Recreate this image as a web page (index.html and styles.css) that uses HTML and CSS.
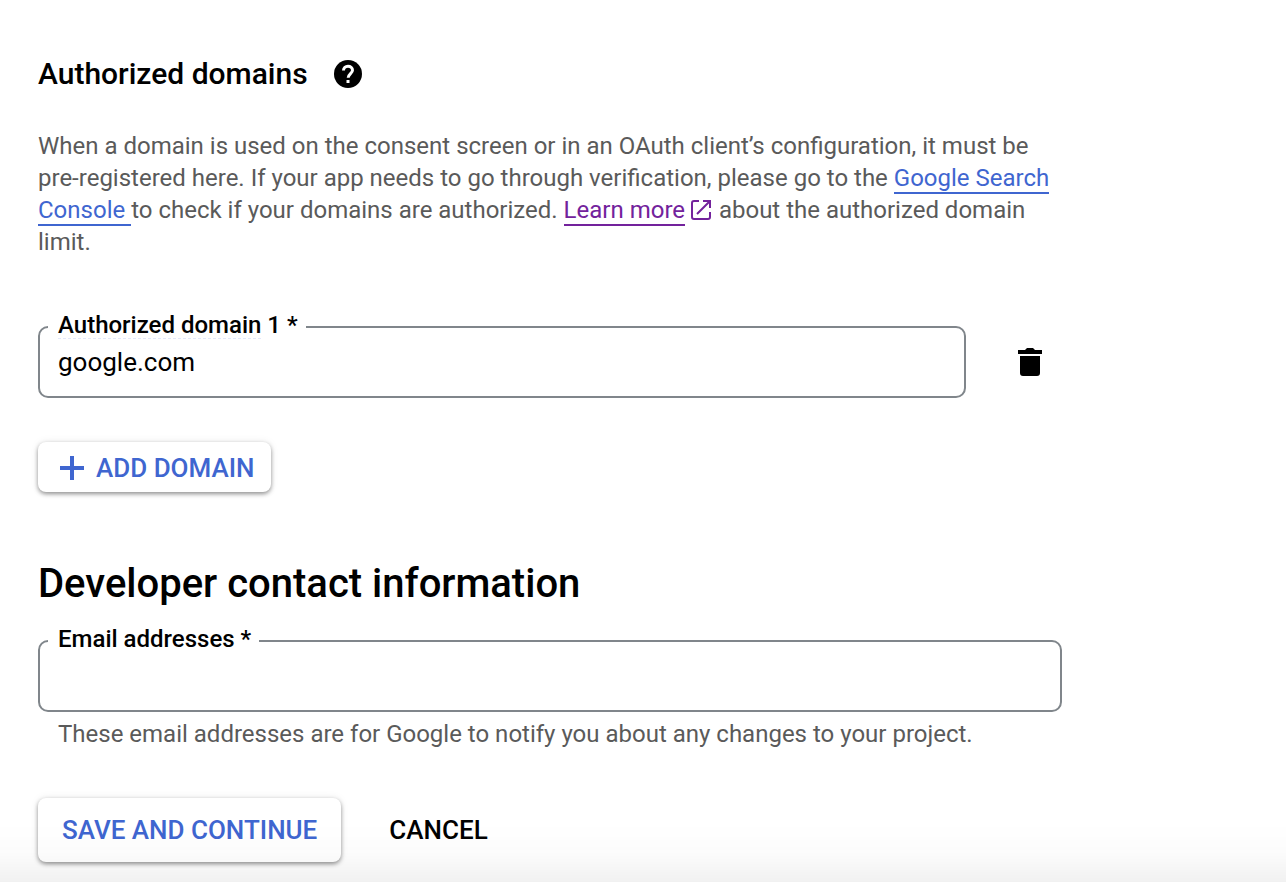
FILE: index.html
```html
<!DOCTYPE html>
<html lang="en">
<head>
<meta charset="utf-8">
<title>Authorized domains</title>
<link rel="stylesheet" href="styles.css">
</head>
<body>
<main class="page">
  <form class="form">
    <section class="domains">
      <header class="heading">
        <h2 class="subtitle">Authorized domains</h2>
        <button class="icon-button" type="button" aria-label="Help">
          <svg width="28" height="28" viewBox="0 0 28 28"><circle cx="14" cy="14" r="14" fill="#000"/><path d="M9.500 10.500C9.500 7.800 11.500 6.200 14 6.200s4.500 1.600 4.500 4c0 3.200-4.300 3.600-4.300 7.600" fill="none" stroke="#fff" stroke-width="3"/><path d="M12.500 20h3v3h-3z" fill="#fff"/></svg>
        </button>
      </header>
      <p class="description">When a domain is used on the consent screen or in an OAuth client’s configuration, it must be pre-registered here. If your app needs to go through verification, please go to the <a class="link" href="#">Google Search Console </a>to check if your domains are authorized. <a class="link visited" href="#">Learn more</a> <svg class="external" width="20" height="20" viewBox="0 0 20 20" fill="none" stroke="currentColor" stroke-width="2"><path d="M8 1H3a2 2 0 0 0-2 2v14a2 2 0 0 0 2 2h14a2 2 0 0 0 2-2v-5M12 1h7v7M19 1 6 14"/></svg> about the authorized domain limit.</p>
      <div class="domain-row">
        <fieldset class="field">
          <legend class="legend"><label class="misspelled" for="domain">Authorized domain</label> 1 *</legend>
          <input class="input" id="domain" type="text" value="google.com" spellcheck="false">
        </fieldset>
        <button class="icon-button delete" type="button" aria-label="Delete domain">
          <svg width="24" height="28" viewBox="0 0 24 28" fill="currentColor"><path d="M0 2h7l2-2h6l2 2h7v4H0zM2 8h20v17a3 3 0 0 1-3 3H5a3 3 0 0 1-3-3z"/></svg>
        </button>
      </div>
      <button class="button add" type="button">
        <svg width="24" height="24" viewBox="0 0 24 24" fill="none" stroke="currentColor" stroke-width="4"><path d="M12 0v24M0 12h24"/></svg>
        ADD DOMAIN
      </button>
    </section>
    <section class="contact">
      <h1 class="title">Developer contact information</h1>
      <fieldset class="field">
        <legend class="legend"><label for="email">Email addresses *</label></legend>
        <input class="input" id="email" type="text">
      </fieldset>
      <p class="hint">These email addresses are for Google to notify you about any changes to your project.</p>
    </section>
    <footer class="actions">
      <button class="button save" type="button">SAVE AND CONTINUE</button>
      <button class="button cancel" type="button">CANCEL</button>
    </footer>
  </form>
</main>
</body>
</html>
```
FILE: styles.css
```css
* { box-sizing: border-box; }
body {
  margin: 0;
  min-height: 100vh;
  background: #fff;
  color: #000;
  font-family: Roboto, "Liberation Sans", sans-serif;
  font-size: 24px;
  line-height: 32px;
}
/* Shade along the bottom edge of the window */
body::after {
  content: "";
  position: fixed;
  inset: auto 0 0;
  height: 60px;
  background: linear-gradient(transparent, rgba(0, 0, 0, .012) 50%, rgba(0, 0, 0, .055));
  pointer-events: none;
}
button, input { font: inherit; }
h1, h2, p, fieldset { margin: 0; }
.page { padding: 56px 38px 20px; }
.form { max-width: 1024px; }
.heading { display: flex; align-items: center; gap: 26px; }
.subtitle { font-size: 30px; font-weight: 500; line-height: 36px; }
.icon-button {
  display: flex;
  padding: 0;
  border: 0;
  background: none;
  color: #000;
}
.description { margin-top: 38px; color: #5a5a5a; }
.link {
  color: #3f66d0;
  text-decoration: none;
  border-bottom: 2px solid currentColor;
}
.visited { color: #73229c; }
.external { margin-right: 2px; color: #73229c; vertical-align: -2px; }
.domain-row { display: flex; align-items: center; gap: 52px; margin-top: 53px; padding-right: 20px; }
.delete { padding-top: 14px; }
.field {
  flex: 1;
  min-width: 0;
  height: 87px;
  padding: 0 8px;
  border: 2px solid #80868b;
  border-radius: 10px;
}
.legend { padding: 0 8px 4px 10px; font-weight: 500; line-height: 28px; }
.misspelled { text-decoration: underline dashed 1px #e3e8fa; text-underline-offset: 5px; }
.input {
  display: block;
  width: 100%;
  height: 38px;
  padding: 0 10px;
  border: 0;
  outline: 0;
  background: none;
  color: #000;
  font-size: 26px;
}
.button {
  display: flex;
  align-items: center;
  border: 0;
  border-radius: 8px;
  background: #fff;
  color: #3f66d0;
  font-size: 26px;
  font-weight: 500;
}
.add, .save { box-shadow: 0 2px 4px rgba(0, 0, 0, .4), 0 0 8px rgba(0, 0, 0, .08); }
.add { gap: 12px; height: 50px; margin-top: 44px; padding: 2px 16px 0 22px; }
.title { margin: 65px 0 14px; font-size: 40px; font-weight: 500; line-height: 54px; }
.hint { margin-top: 6px; padding-left: 20px; color: #5a5a5a; }
.actions { display: flex; gap: 24px; margin-top: 48px; }
.save, .cancel { height: 64px; padding: 0 24px; }
.cancel { color: #000; background: none; }
```
